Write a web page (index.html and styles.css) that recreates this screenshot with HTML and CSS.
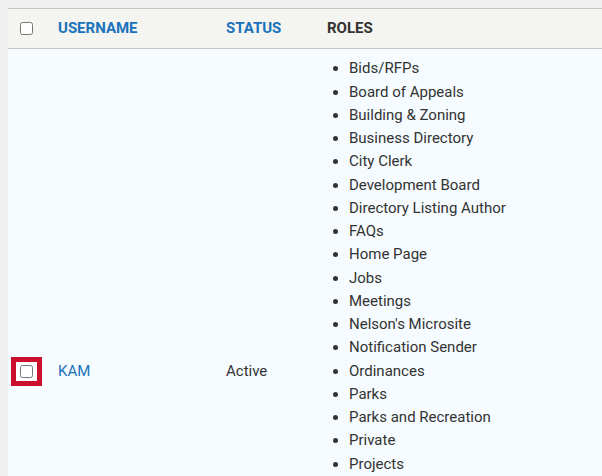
FILE: index.html
```html
<!DOCTYPE html>
<html>
<head>
<meta charset="utf-8">
<link rel="stylesheet" href="styles.css">
</head>
<body>
<table class="users">
  <thead>
    <tr>
      <th class="c-check"><input type="checkbox" class="cb"></th>
      <th class="c-user sortable">USERNAME</th>
      <th class="c-status sortable">STATUS</th>
      <th class="c-roles">ROLES</th>
    </tr>
  </thead>
  <tbody>
    <tr>
      <td class="c-check"><span class="focus"><input type="checkbox" class="cb"></span></td>
      <td class="c-user"><a href="#" class="user-link">KAM</a></td>
      <td class="c-status">Active</td>
      <td class="c-roles">
        <ul class="roles">
          <li>Bids/RFPs</li>
          <li>Board of Appeals</li>
          <li>Building &amp; Zoning</li>
          <li>Business Directory</li>
          <li>City Clerk</li>
          <li>Development Board</li>
          <li>Directory Listing Author</li>
          <li>FAQs</li>
          <li>Home Page</li>
          <li>Jobs</li>
          <li>Meetings</li>
          <li>Nelson's Microsite</li>
          <li>Notification Sender</li>
          <li>Ordinances</li>
          <li>Parks</li>
          <li>Parks and Recreation</li>
          <li>Private</li>
          <li>Projects</li>
          <li>Public Safety</li>
          <li>Public Works</li>
          <li>Purchasing</li>
          <li>Recycling</li>
          <li>Site Administrator</li>
          <li>Staff Directory</li>
          <li>Tourism</li>
          <li>Utilities</li>
          <li>Zoning Board</li>
        </ul>
      </td>
    </tr>
  </tbody>
</table>
</body>
</html>
```
FILE: styles.css
```css
html, body {
  background: #efefef;
}
body {
  margin: 8px 0 0 8px;
  font-family: Roboto, "Liberation Sans", sans-serif;
  font-size: 15px;
  color: #333;
}
.users {
  border-collapse: collapse;
  width: 100%;
  line-height: 23.25px;
}
.users th,
.users td {
  padding: 8px 12px;
  text-align: left;
}
.users thead tr {
  background: #f4f4f0;
  border-top: 1px solid #c6c6c6;
  border-bottom: 1px solid #c6c6c6;
}
.users th {
  font-weight: 700;
  color: #333;
}
.users th.sortable {
  color: #1a72bb;
}
.users tbody tr {
  background: #f5fbfe;
}
.c-check {
  width: 14px;
}
.c-user {
  width: 144px;
}
.c-status {
  width: 77px;
}
.cb {
  margin: 0;
  width: 13px;
  height: 13px;
  vertical-align: -2px;
}
.focus {
  display: inline-flex;
  vertical-align: middle;
  padding: 3px 4px;
  margin: -8px -9px;
  background: #fff;
  border: 5px solid #cc0f2d;
}
.focus .cb {
  vertical-align: top;
}
.user-link {
  color: #1a72bb;
  text-decoration: none;
}
.roles {
  margin: 0;
  padding-left: 22px;
}
```
